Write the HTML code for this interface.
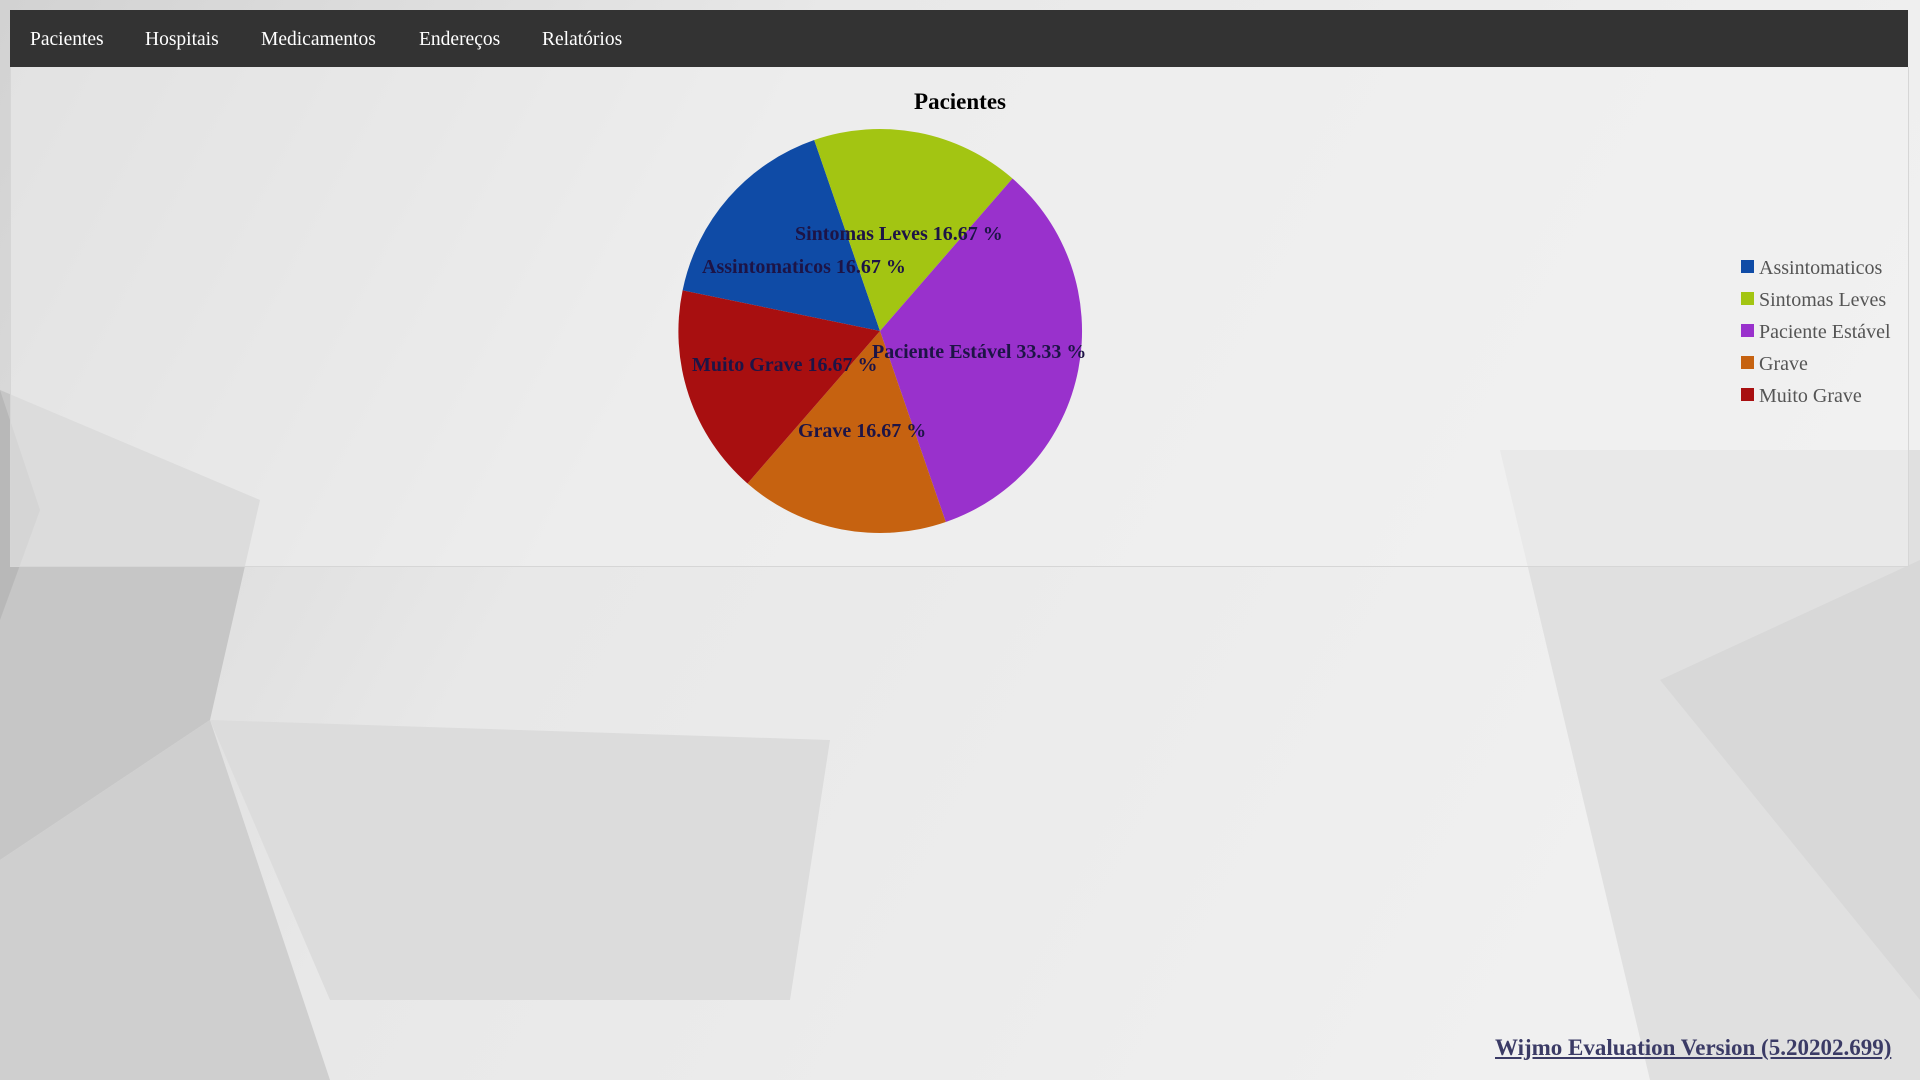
<!DOCTYPE html>
<html><head><meta charset="utf-8"><style>
body{margin:0;width:1920px;height:1080px;overflow:hidden;position:relative;font-family:"Liberation Serif",serif;background:#e8e8e8}
#bg{position:absolute;left:0;top:0}
nav{position:absolute;left:10px;top:10px;width:1898px;height:57px;background:#333;}
nav span{position:absolute;top:19px;color:#fff;font-size:19.5px}
#box{position:absolute;left:10px;top:67px;width:1897px;height:499px;border:1px solid #d6d6d6;border-top:none}
#foot{position:absolute;left:1495px;top:1035px;font-size:23px;font-weight:bold;color:#3b3b66;text-decoration:underline}
</style></head><body>
<svg id="bg" width="1920" height="1080">
<defs><linearGradient id="g" x1="0" y1="0" x2="1" y2="0.3"><stop offset="0" stop-color="#d2d2d2"/><stop offset="0.4" stop-color="#e8e8e8"/><stop offset="1" stop-color="#f0f0f0"/></linearGradient></defs>
<rect width="1920" height="1080" fill="url(#g)"/>
<polygon points="0,390 260,500 210,720 0,860" fill="#c6c6c6"/>
<polygon points="0,860 210,720 330,1080 0,1080" fill="#cfcfcf"/>
<polygon points="0,390 40,510 0,620" fill="#b8b8b8"/>
<polygon points="210,720 830,740 790,1000 330,1000" fill="#dcdcdc"/>
<polygon points="1500,450 1920,450 1920,1080 1650,1080" fill="#e0e0e0"/>
<polygon points="1660,680 1920,560 1920,1000" fill="#d8d8d8"/>
<polygon points="10,67 1908,67 1908,566 10,566" fill="#f2f2f2" opacity="0.5"/>
</svg>
<nav><span style="left:20px">Pacientes</span><span style="left:135px">Hospitais</span><span style="left:251px">Medicamentos</span><span style="left:409px">Endereços</span><span style="left:532px">Relatórios</span></nav>
<div id="box"></div>
<svg style="position:absolute;left:0;top:0" width="1920" height="1080" font-family="Liberation Serif, serif">
<text x="960" y="109" text-anchor="middle" font-size="23" font-weight="bold">Pacientes</text>
<g transform="translate(880,331)">
<path d="M0,0 L-197.4,-40.6 A202,202 0 0 1 -65.8,-191 Z" fill="#0f4ba6"/>
<path d="M0,0 L-65.8,-191 A202,202 0 0 1 132.5,-152.5 Z" fill="#a3c512"/>
<path d="M0,0 L132.5,-152.5 A202,202 0 0 1 65.8,191 Z" fill="#9931cc"/>
<path d="M0,0 L65.8,191 A202,202 0 0 1 -132.5,152.5 Z" fill="#c66210"/>
<path d="M0,0 L-132.5,152.5 A202,202 0 0 1 -197.4,-40.6 Z" fill="#a80f10"/>
</g>
<g font-size="20" font-weight="bold" fill="#1d1446">
<text x="795" y="240">Sintomas Leves 16.67 %</text>
<text x="702" y="273">Assintomaticos 16.67 %</text>
<text x="872" y="358">Paciente Estável 33.33 %</text>
<text x="692" y="371">Muito Grave 16.67 %</text>
<text x="798" y="437">Grave 16.67 %</text>
</g>
<g font-size="20" fill="#555">
<rect x="1741" y="260" width="13" height="13" fill="#0f4ba6"/><text x="1759" y="274">Assintomaticos</text>
<rect x="1741" y="292" width="13" height="13" fill="#a3c512"/><text x="1759" y="306">Sintomas Leves</text>
<rect x="1741" y="324" width="13" height="13" fill="#9931cc"/><text x="1759" y="338">Paciente Estável</text>
<rect x="1741" y="356" width="13" height="13" fill="#c66210"/><text x="1759" y="370">Grave</text>
<rect x="1741" y="388" width="13" height="13" fill="#a80f10"/><text x="1759" y="402">Muito Grave</text>
</g>
</svg>
<div id="foot">Wijmo Evaluation Version (5.20202.699)</div>
</body></html>
